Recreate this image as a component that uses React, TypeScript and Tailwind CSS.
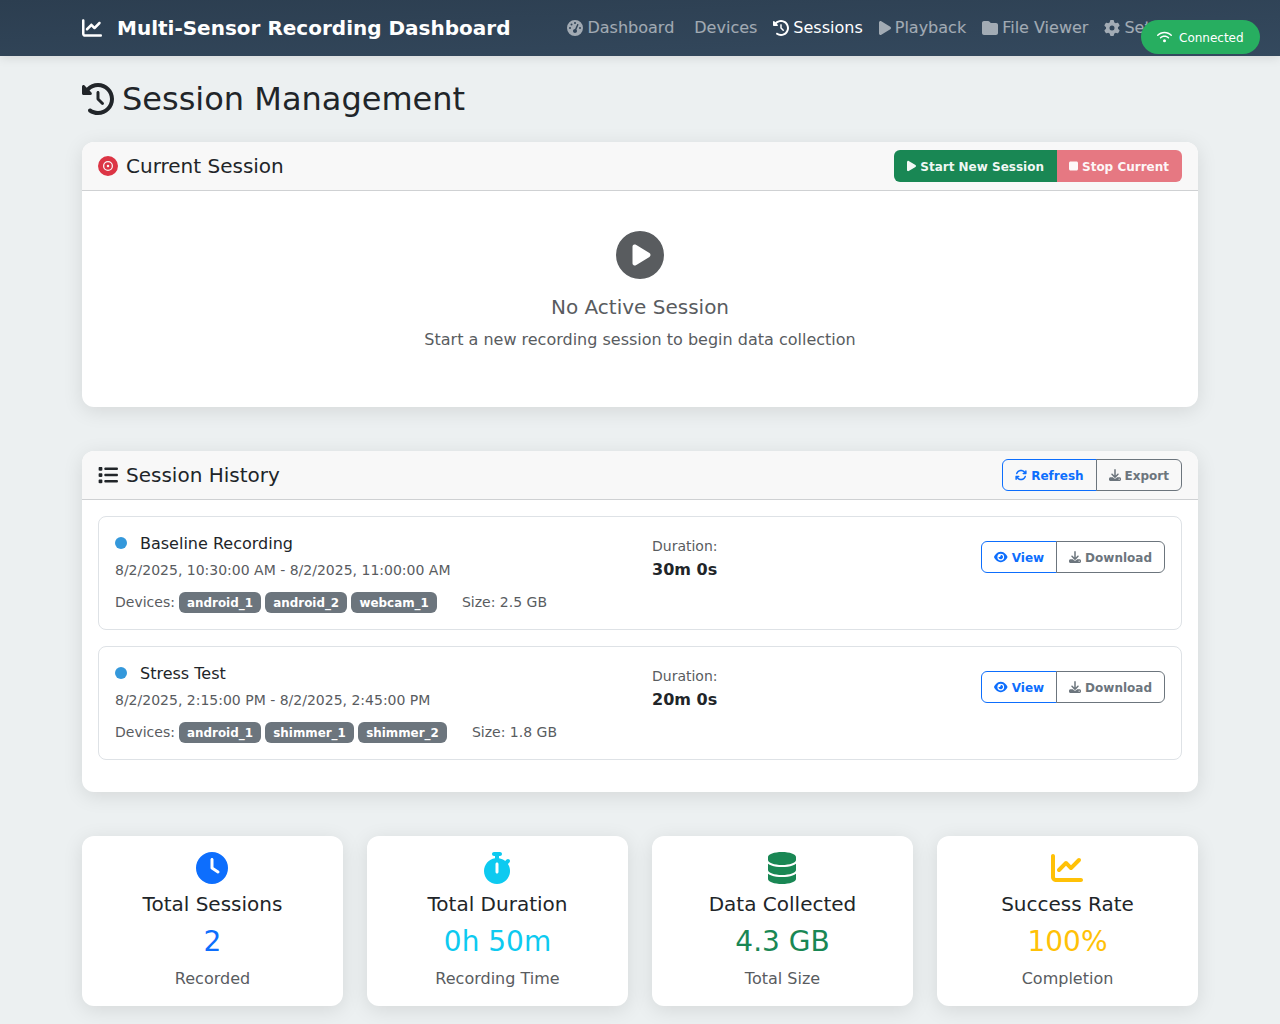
import React from "react";
import { FaChartLine, FaGaugeHigh, FaClockRotateLeft, FaPlay, FaFolder, FaGear, FaWifi, FaStop, FaCirclePlay, FaList, FaArrowsRotate, FaDownload, FaEye, FaClock, FaStopwatch, FaDatabase, FaRecordVinyl } from "react-icons/fa6";

const font = { fontFamily: '"DejaVu Sans", sans-serif' };

function NavLink({ icon, label, active }: { icon?: React.ReactNode; label: string; active?: boolean }) {
  return (
    <a className={`flex items-center gap-[4px] px-2 py-2 text-base whitespace-nowrap ${active ? "text-white" : "text-white/55"}`}>
      {icon}
      <span>{label}</span>
    </a>
  );
}

function ActionButton({ color, icon, label, side }: { color: "blue" | "gray"; icon: React.ReactNode; label: string; side: "l" | "r" }) {
  return (
    <button
      className={`h-8 px-3 flex items-center gap-[4px] text-xs leading-[30px] font-bold border ${
        color === "blue" ? "border-[#0d6efd] text-[#0d6efd]" : "border-[#6c757d] text-[#6c757d]"
      } ${side === "l" ? "rounded-l-md" : "rounded-r-md -ml-px"}`}
    >
      {icon}
      <span className="relative top-px">{label}</span>
    </button>
  );
}

function Session({ title, dates, devices, size, duration }: { title: string; dates: string; devices: string[]; size: string; duration: string }) {
  return (
    <div className="border border-[#dee2e6] rounded-lg p-4 mb-4 h-[114px]">
      <div className="flex -mx-3">
        <div className="w-1/2 px-3">
          <div className="flex items-center gap-[13px] h-[19px] mb-2 text-base text-[#212529]">
            <span className="w-3 h-3 rounded-full bg-[#3498db]" />
            <span className="relative top-px">{title}</span>
          </div>
          <div className="text-sm leading-[21px] text-[#595c5f] mb-[11px]">{dates}</div>
          <div className="flex items-center h-[21px] text-sm text-[#595c5f]">
            <span className="mr-1 relative -top-px">Devices:</span>
            <div className="flex gap-1">
              {devices.map((d) => (
                <span key={d} className="h-[21px] px-[8.2px] pt-px flex items-center rounded-md bg-[#6c757d] text-white text-[11.9px] font-bold">{d}</span>
              ))}
            </div>
            <span className="ml-[25px] relative -top-px">{size}</span>
          </div>
        </div>
        <div className="w-1/4 px-3 pt-[3px]">
          <div className="text-sm leading-[21px] text-[#595c5f]">Duration:</div>
          <div className="text-base font-bold leading-[26px] text-[#212529]">{duration}</div>
        </div>
        <div className="w-1/4 px-3 pt-2 flex justify-end items-start">
          <ActionButton color="blue" side="l" icon={<FaEye className="w-[13.5px] h-3" />} label="View" />
          <ActionButton color="gray" side="r" icon={<FaDownload className="w-3 h-3" />} label="Download" />
        </div>
      </div>
    </div>
  );
}

function Stat({ icon, title, value, sub, color }: { icon: React.ReactNode; title: string; value: string; sub: string; color: string }) {
  return (
    <div className="bg-white rounded-xl shadow-[0_4px_20px_rgba(0,0,0,0.1)] p-4 h-[170px] flex flex-col items-center">
      <div className={`h-8 flex items-center mr-px ${color}`}>{icon}</div>
      <div className="text-xl leading-6 text-[#212529] mt-2">{title}</div>
      <div className={`text-[28px] leading-[36px] mt-[8px] ${color}`}>{value}</div>
      <div className="text-base leading-6 text-[#595c5f] mt-[7px]">{sub}</div>
    </div>
  );
}

export default function App() {
  return (
    <div className="min-h-[1054px] bg-[#ecf0f1] relative" style={font}>
      <nav className="h-14 bg-gradient-to-br from-[#2c3e50] to-[#34495e] shadow-[0_2px_10px_rgba(0,0,0,0.1)]">
        <div className="w-[1140px] mx-auto px-3 h-full flex items-center">
          <div className="flex items-center gap-[15px] text-white text-xl font-bold whitespace-nowrap">
            <FaChartLine className="w-5 h-5" />
            <span>Multi-Sensor Recording Dashboard</span>
          </div>
          <div className="flex items-center ml-[49px]">
            <NavLink icon={<FaGaugeHigh className="w-4 h-4" />} label="Dashboard" />
            <span className="w-[4px]" />
            <NavLink label="Devices" />
            <NavLink active icon={<FaClockRotateLeft className="w-4 h-4" />} label="Sessions" />
            <NavLink icon={<FaPlay className="w-3 h-4" />} label="Playback" />
            <NavLink icon={<FaFolder className="w-4 h-4" />} label="File Viewer" />
            <NavLink icon={<FaGear className="w-4 h-4" />} label="Settings" />
          </div>
        </div>
      </nav>

      <div className="absolute top-5 right-5 w-[119px] h-[34px] rounded-full bg-[#27ae60] text-white text-xs flex items-center pl-4 gap-[7px]">
        <FaWifi className="w-[15px] h-3" />
        <span className="relative top-px">Connected</span>
      </div>

      <main className="w-[1140px] mx-auto px-3 pt-[22px]">
        <h1 className="flex items-center gap-2 text-[32px] leading-[42px] text-[#212529] mb-[22px]">
          <FaClockRotateLeft className="w-8 h-8" />
          <span>Session Management</span>
        </h1>

        <section className="bg-white rounded-xl shadow-[0_4px_20px_rgba(0,0,0,0.1)] mb-[44px] overflow-hidden">
          <header className="h-[49px] px-4 flex items-center justify-between bg-[#f8f8f8] border-b border-[#cfd1d3]">
            <div className="flex items-center gap-2 text-xl text-[#212529]">
              <FaRecordVinyl className="w-5 h-5 text-[#dc3545]" />
              <span>Current Session</span>
            </div>
            <div className="flex">
              <button className="h-8 px-[13px] flex items-center gap-[4px] bg-[#198754] text-white/95 text-xs font-bold rounded-l-md">
                <FaPlay className="w-[9px] h-3" />
                <span className="relative top-px">Start New Session</span>
              </button>
              <button className="h-8 pl-[12px] pr-[13px] flex items-center gap-[4px] bg-[#e67882] text-white/95 text-xs font-bold rounded-r-md">
                <FaStop className="w-[9px] h-3" />
                <span className="relative top-px">Stop Current</span>
              </button>
            </div>
          </header>
          <div className="h-[216px] pt-10 flex flex-col items-center">
            <FaCirclePlay className="w-12 h-12 text-[#595c5f]" />
            <div className="text-xl leading-6 text-[#595c5f] mt-4 mb-2">No Active Session</div>
            <div className="text-base leading-[26px] text-[#595c5f]">Start a new recording session to begin data collection</div>
          </div>
        </section>

        <section className="bg-white rounded-xl shadow-[0_4px_20px_rgba(0,0,0,0.1)] mb-[44px] overflow-hidden">
          <header className="h-[49px] px-4 flex items-center justify-between bg-[#f8f8f8] border-b border-[#cfd1d3]">
            <div className="flex items-center gap-2 text-xl text-[#212529]">
              <FaList className="w-5 h-5" />
              <span>Session History</span>
            </div>
            <div className="flex">
              <ActionButton color="blue" side="l" icon={<FaArrowsRotate className="w-3 h-3" />} label="Refresh" />
              <ActionButton color="gray" side="r" icon={<FaDownload className="w-3 h-3" />} label="Export" />
            </div>
          </header>
          <div className="px-4 pt-4 pb-4 h-[292px]">
            <Session title="Baseline Recording" dates="8/2/2025, 10:30:00 AM - 8/2/2025, 11:00:00 AM" devices={["android_1", "android_2", "webcam_1"]} size="Size: 2.5 GB" duration="30m 0s" />
            <Session title="Stress Test" dates="8/2/2025, 2:15:00 PM - 8/2/2025, 2:45:00 PM" devices={["android_1", "shimmer_1", "shimmer_2"]} size="Size: 1.8 GB" duration="20m 0s" />
          </div>
        </section>

        <div className="grid grid-cols-4 gap-6 mb-6">
          <Stat color="text-[#0d6efd]" icon={<FaClock className="w-8 h-8" />} title="Total Sessions" value="2" sub="Recorded" />
          <Stat color="text-[#0dcaf0]" icon={<FaStopwatch className="w-7 h-8" />} title="Total Duration" value="0h 50m" sub="Recording Time" />
          <Stat color="text-[#198754]" icon={<FaDatabase className="w-7 h-8" />} title="Data Collected" value="4.3 GB" sub="Total Size" />
          <Stat color="text-[#ffc107]" icon={<FaChartLine className="w-8 h-8" />} title="Success Rate" value="100%" sub="Completion" />
        </div>
      </main>
    </div>
  );
}
